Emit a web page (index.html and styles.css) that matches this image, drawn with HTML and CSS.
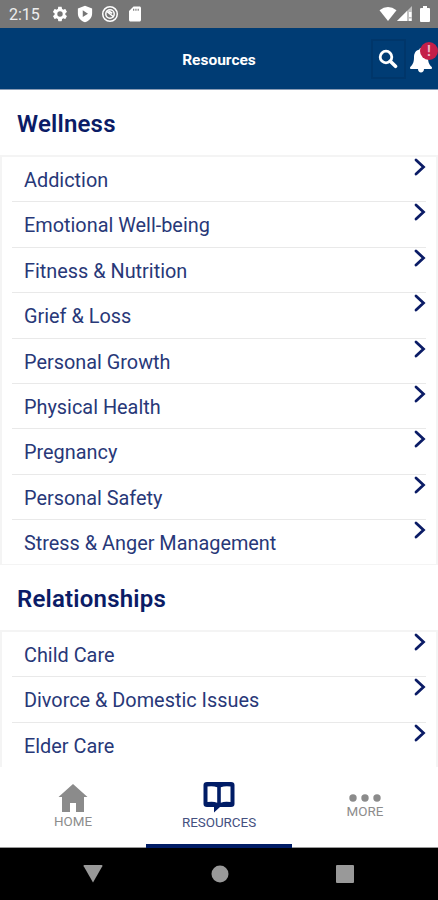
FILE: index.html
```html
<!DOCTYPE html>
<html lang="en">
<head>
  <meta charset="UTF-8" />
  <meta name="viewport" content="width=device-width, initial-scale=1.0" />
  <title>Resources</title>
  <link rel="stylesheet" href="styles.css">
</head>
<body>
  <div class="app">
    <div class="status-bar">
      <span class="time">2:15</span>
      <div class="status-icons">
        <svg width="18" height="18" viewBox="0 0 24 24"><path fill-rule="evenodd" d="M19.1 12.9a7 7 0 0 0 0-1.8l2-1.6c.2-.1.2-.4.1-.6l-1.900-3.300c-.1-.2-.4-.3-.6-.2l-2.400 1a7 7 0 0 0-1.600-1l-.4-2.500c0-.2-.2-.4-.5-.4h-3.800c-.3 0-.5.2-.5.4l-.3 2.500a7 7 0 0 0-1.700 1l-2.300-1c-.2-.1-.5 0-.6.2L2.700 8.900c-.1.200-.1.500.1.600l2 1.600a7 7 0 0 0 0 1.800l-2 1.600c-.2.100-.2.400-.1.600l1.900 3.300c.1.200.4.300.6.200l2.400-1a7 7 0 0 0 1.600 1l.4 2.500c0 .2.200.4.500.4h3.800c.3 0 .5-.2.500-.4l.3-2.500a7 7 0 0 0 1.700-1l2.300 1c.2.100.5 0 .6-.2l1.900-3.300c.1-.2.100-.5-.1-.6zM12 15.600a3.600 3.600 0 1 1 0-7.200 3.600 3.600 0 0 1 0 7.200z"/></svg>
        <svg width="18" height="18" viewBox="0 0 24 24"><path fill-rule="evenodd" d="M12 1 2.500 4.500V11c0 6 4 10.500 9.500 12 5.500-1.500 9.500-6 9.500-12V4.500zM9 7l7 4.500L9 16z"/></svg>
        <svg width="18" height="18" viewBox="0 0 24 24" fill="none" stroke="#fff"><circle cx="12" cy="12" r="9.700" stroke-width="2"/><circle cx="12" cy="12" r="5.600" stroke-width="2"/><path d="m7 8 10 8M10 8l5 3" stroke-width="2"/></svg>
        <svg width="18" height="18" viewBox="0 0 24 24"><path fill-rule="evenodd" d="M18 2h-8L4 8v12c0 1.100.9 2 2 2h12c1.100 0 2-.9 2-2V4c0-1.100-.9-2-2-2zM9.500 5H11v2.500H9.500zm3 0H14v2.500h-1.500zm3 0H17v2.500h-1.500z"/></svg>
      </div>
      <svg class="wifi" width="18" height="16" viewBox="0 0 18 16"><path d="M9 15 .5 4.300Q9-2.500 17.500 4.300z"/></svg>
      <svg class="signal" width="16" height="16" viewBox="0 0 16 16"><path opacity=".55" d="M0 15 15 0v15z"/><path d="M0 15 10 5v10zM12 6h2.500v5H12zm0 6.500h2.500V15H12z"/></svg>
      <svg class="battery" width="10" height="16" viewBox="0 0 10 16"><path d="M3 0h4v2h2q1 0 1 1v12q0 1-1 1H1q-1 0-1-1V3q0-1 1-1h2z"/></svg>
    </div>

    <div class="header">
      <h1>Resources</h1>
      <div class="actions">
        <div class="search">
          <svg width="20" height="20" viewBox="0 0 20 20" fill="none" stroke="#fff"><circle cx="8" cy="8" r="5.800" stroke-width="2.800"/><path d="m12.300 12.300 5.200 5" stroke-width="3.600" stroke-linecap="round"/></svg>
        </div>
        <div class="bell">
          <svg width="22" height="25" viewBox="0 0 22 25"><path d="M11 0c-1 0-1.600.7-1.600 1.600C5.500 2.500 4 5.500 4 9.500c0 5-1.500 7.500-3.500 9.200-1 1-.4 2.300.8 2.300h19.400c1.200 0 1.800-1.300.8-2.300-2-1.700-3.500-4.200-3.500-9.200 0-4-1.500-7-5.400-7.900C12.600.7 12 0 11 0zM8 21h6c0 2.200-1.300 3.500-3 3.500s-3-1.300-3-3.500z"/></svg>
          <span class="badge">!</span>
        </div>
      </div>
    </div>

    <div class="content">
      <h2>Wellness</h2>
      <ul class="list">
        <li>Addiction</li>
        <li>Emotional Well-being</li>
        <li>Fitness &amp; Nutrition</li>
        <li>Grief &amp; Loss</li>
        <li>Personal Growth</li>
        <li>Physical Health</li>
        <li>Pregnancy</li>
        <li>Personal Safety</li>
        <li>Stress &amp; Anger Management</li>
      </ul>
      <h2>Relationships</h2>
      <ul class="list">
        <li>Child Care</li>
        <li>Divorce &amp; Domestic Issues</li>
        <li>Elder Care</li>
      </ul>
    </div>

    <div class="tabs">
      <div class="tab">
        <svg width="30" height="28" viewBox="0 0 30 28"><path d="M15 0 .5 13H4v15h8v-9h6v9h8V13h3.500z"/></svg>
        <span>HOME</span>
      </div>
      <div class="tab active">
        <svg width="32" height="32" viewBox="0 0 32 32"><path fill-rule="evenodd" d="M4 1h24q3.500 0 3.500 3v19q0 3-3.500 3H17l-6 5.500V26H4q-3.500 0-3.500-3V4Q.5 1 4 1zM4.500 5.500V21q6-1 9.700.8V6.300q-4-1.600-9.700-.8zm23 0q-5.700-.8-9.700.8v15.500q3.700-1.800 9.700-.8z"/></svg>
        <span>RESOURCES</span>
      </div>
      <div class="tab more">
        <svg width="32" height="8" viewBox="0 0 32 8"><circle cx="4" cy="4" r="3.700"/><circle cx="16" cy="4" r="3.700"/><circle cx="28" cy="4" r="3.700"/></svg>
        <span>MORE</span>
      </div>
    </div>

    <div class="nav-bar">
      <svg width="20" height="18" viewBox="0 0 20 18"><path d="M1.500 0h17q1.500 0 .8 1.300L10 17.500.7 1.300Q0 0 1.500 0z"/></svg>
      <svg width="18" height="18" viewBox="0 0 18 18"><circle cx="9" cy="9" r="8.500"/></svg>
      <svg width="18" height="18" viewBox="0 0 18 18"><rect width="18" height="18" rx="1"/></svg>
    </div>
  </div>

  <script>
    // chevron at the right edge of every row
    document.querySelectorAll('.list li').forEach(li => {
      li.insertAdjacentHTML('beforeend', '<svg class="chevron" width="12" height="18" viewBox="0 0 12 18"><path d="M2 2l7.500 7L2 16"/></svg>');
    });
  </script>
</body>
</html>
```
FILE: styles.css
```css
* {
  margin: 0;
  padding: 0;
  box-sizing: border-box;
}
body {
  background: #fff;
  color: #0b1c66;
  font-family: Roboto, Arial, sans-serif;
}
svg {
  display: block;
  flex-shrink: 0;
}
.app {
  height: 900px;
  display: flex;
  flex-direction: column;
  overflow: hidden;
}
.status-bar {
  height: 28px;
  flex-shrink: 0;
  display: flex;
  align-items: center;
  padding: 0 8px 0 9px;
  background: #767676;
  color: #eee;
  fill: #fff;
}
.time {
  width: 42px;
  font-size: 16px;
}
.status-icons {
  display: flex;
  gap: 7px;
  flex: 1;
}
.signal {
  margin-right: 7px;
}
.header {
  height: 62px;
  flex-shrink: 0;
  display: grid;
  grid-template-columns: 1fr auto 1fr;
  align-items: center;
  background: #003c74;
  border-bottom: 1px solid #8a9cb5;
  color: #fff;
}
.header h1 {
  grid-column: 2;
  padding-top: 2px;
  font-size: 15.5px;
  font-weight: 700;
}
.actions {
  display: flex;
  justify-content: flex-end;
  align-items: center;
  gap: 4px;
  padding-right: 6px;
}
.search {
  width: 35px;
  height: 40px;
  display: flex;
  align-items: center;
  justify-content: center;
  padding-right: 2px;
  border: 2px solid #00366a;
}
.bell {
  position: relative;
  margin-top: 4px;
  fill: #fff;
}
.badge {
  position: absolute;
  top: -6px;
  right: -6px;
  width: 18px;
  height: 18px;
  border-radius: 50%;
  background: #c41f48;
  color: #f0b8c6;
  font-size: 14px;
  font-weight: 700;
  line-height: 18px;
  text-align: center;
}
.content {
  flex: 1;
  min-height: 0;
  overflow: hidden;
}
.content h2 {
  height: 65px;
  padding-left: 17px;
  font-size: 24px;
  font-weight: 600;
  letter-spacing: 0.2px;
  line-height: 68px;
}
.list {
  list-style: none;
  padding: 0 10px;
  border: 2px solid #f4f4f4;
  border-bottom-width: 1px;
}
.list li {
  height: 45.4px;
  display: flex;
  justify-content: space-between;
  padding: 1px 0 0 12px;
  color: #283878;
  font-size: 19.87px;
  line-height: 45.6px;
  border-bottom: 1px solid #e9e9e9;
}
.list li:last-child {
  height: 43.8px;
  border-bottom: none;
}
.chevron {
  fill: none;
  stroke: #0b1c66;
  stroke-width: 2.8;
  stroke-linecap: round;
}
.tabs {
  height: 81px;
  flex-shrink: 0;
  display: flex;
  background: #fff;
}
.tab {
  flex: 1;
  display: flex;
  flex-direction: column;
  align-items: center;
  padding-top: 17px;
  border-bottom: 1px solid #999;
  color: #8c8c8c;
  fill: #8b8b8b;
  font-size: 13.4px;
  line-height: 20px;
}
.tab.active {
  padding-top: 14px;
  border-bottom: 4px solid #001c66;
  color: #44507f;
  fill: #001c66;
}
.tab.more {
  padding-top: 27px;
}
.nav-bar {
  height: 52px;
  flex-shrink: 0;
  display: flex;
  align-items: center;
  justify-content: space-between;
  padding: 0 84px 0 83px;
  background: #000;
  fill: #999;
}
```
